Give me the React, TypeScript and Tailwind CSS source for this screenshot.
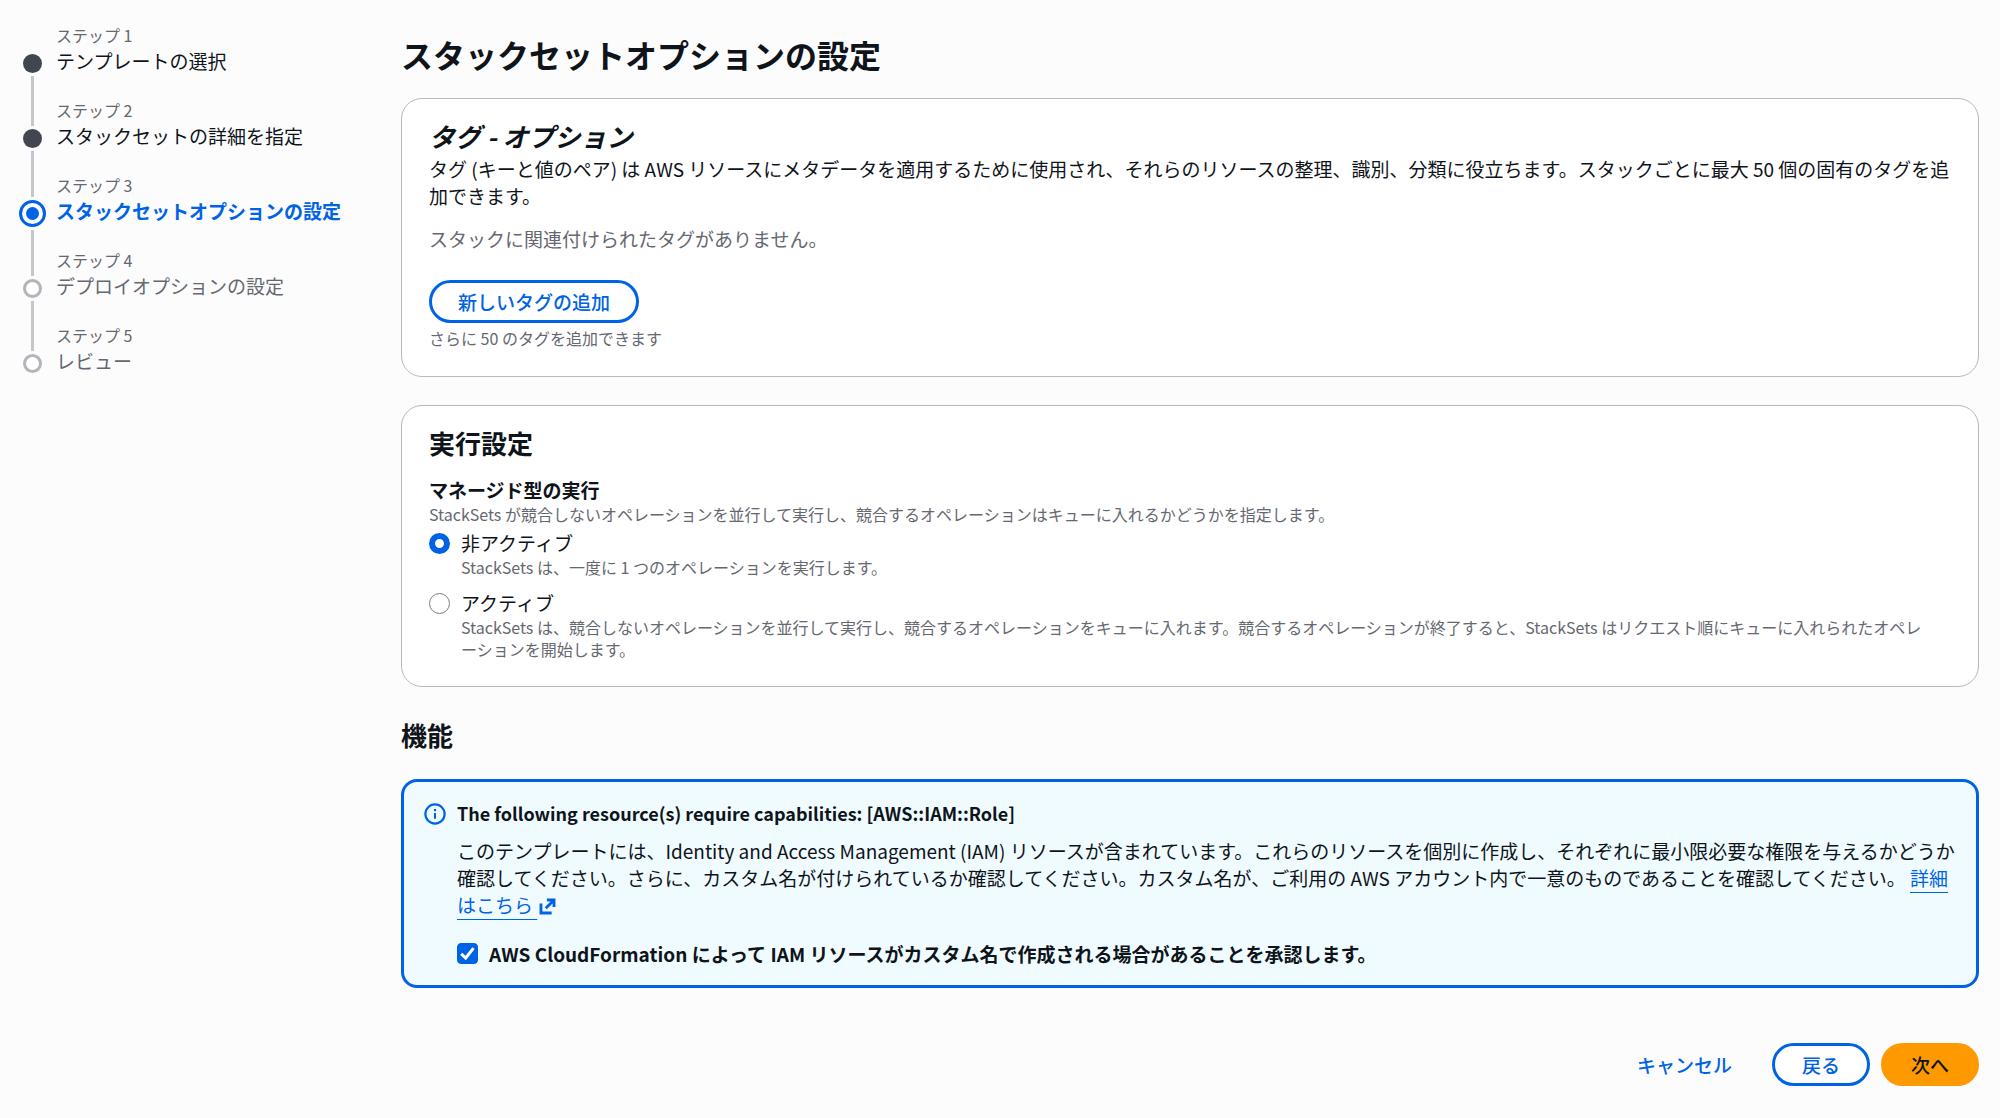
import { useState } from 'react';
import { clsx } from 'clsx';

type StepState = 'visited' | 'active' | 'upcoming';

const STEPS: { title: string; state: StepState }[] = [
  { title: 'テンプレートの選択', state: 'visited' },
  { title: 'スタックセットの詳細を指定', state: 'visited' },
  { title: 'スタックセットオプションの設定', state: 'active' },
  { title: 'デプロイオプションの設定', state: 'upcoming' },
  { title: 'レビュー', state: 'upcoming' },
];

const EXECUTION_OPTIONS = [
  {
    value: 'inactive',
    label: '非アクティブ',
    description: 'StackSets は、一度に 1 つのオペレーションを実行します。',
  },
  {
    value: 'active',
    label: 'アクティブ',
    description:
      'StackSets は、競合しないオペレーションを並行して実行し、競合するオペレーションをキューに入れます。競合するオペレーションが終了すると、StackSets はリクエスト順にキューに入れられたオペレーションを開始します。',
  },
];

function StepDot({ state }: { state: StepState }) {
  if (state === 'active') {
    return (
      <span className="my-[3px] flex size-[27px] shrink-0 items-center justify-center rounded-full border-[3px] border-[#0062e4]">
        <span className="size-[13px] rounded-full bg-[#0062e4]" />
      </span>
    );
  }
  return (
    <span
      className={clsx(
        'my-[3px] size-[19px] shrink-0 rounded-full',
        state === 'visited' ? 'bg-[#424650]' : 'border-[3px] border-[#b4b4bb] bg-white',
      )}
    />
  );
}

function Steps() {
  return (
    <nav aria-label="ステップ" className="w-[401px] shrink-0 pt-[23px] pl-[19px]">
      <ol>
        {STEPS.map((step, i) => {
          const last = i === STEPS.length - 1;
          return (
            <li key={step.title} className="flex gap-[10px]">
              <div className="flex w-[27px] shrink-0 flex-col items-center">
                <span
                  className={clsx(
                    'w-[3px] shrink-0',
                    step.state === 'active' ? 'h-[24px]' : 'h-[28px]',
                    i > 0 && 'bg-[#c6c6cd]',
                  )}
                />
                <StepDot state={step.state} />
                {!last && <span className="w-[3px] flex-1 bg-[#c6c6cd]" />}
              </div>
              <div className={clsx(!last && 'pb-[23px]')}>
                <p className="text-[16px] leading-[24px] text-[#656871]">ステップ {i + 1}</p>
                <p
                  className={clsx(
                    'text-[19px] leading-[28px]',
                    step.state === 'visited' && 'text-[#0f141a]',
                    step.state === 'active' && 'font-bold text-[#0062e4]',
                    step.state === 'upcoming' && 'text-[#656871]',
                  )}
                >
                  {step.title}
                </p>
              </div>
            </li>
          );
        })}
      </ol>
    </nav>
  );
}

function InfoIcon() {
  return (
    <svg viewBox="0 0 16 16" className="size-[22px] shrink-0" fill="none" stroke="#0062e4">
      <circle cx="8" cy="8" r="7" strokeWidth="1.6" />
      <path d="M8 7.2v4.3M8 4.4v1.6" strokeWidth="1.5" />
    </svg>
  );
}

function ExternalIcon() {
  return (
    <svg viewBox="0 0 16 16" className="ml-px inline size-[19px] align-[-3px]" fill="none" stroke="currentColor" strokeWidth="2.4">
      <path d="M7.5 2.5H13.5V8.5M13.5 2.5L6.5 9.5M2.5 5.5v8h9" />
    </svg>
  );
}

export default function App() {
  const [execution, setExecution] = useState('inactive');
  const [acknowledged, setAcknowledged] = useState(true);

  return (
    <div className="flex min-h-screen bg-[#fcfcfd] font-['Noto_Sans_CJK_JP',sans-serif] text-[19px] leading-[27px] text-[#0f141a]" lang="ja">
      <Steps />

      <main className="min-w-0 flex-1 pt-[34px] pr-[21px]">
        <h1 className="text-[32px] leading-[40px] font-bold">スタックセットオプションの設定</h1>

        <section className="mt-6 rounded-[21px] border border-[#b8b8c0] bg-white px-[27px] pt-5 pb-[27px]">
          <h2 className="mb-0.5 text-[26px] leading-[34px] font-bold italic">タグ - オプション</h2>
          <p>
            タグ (キーと値のペア) は AWS リソースにメタデータを適用するために使用され、それらのリソースの整理、識別、分類に役立ちます。スタックごとに最大
            50 個の固有のタグを追加できます。
          </p>
          <p className="mt-4 text-[#656871]">スタックに関連付けられたタグがありません。</p>
          <button
            type="button"
            className="mt-7 block h-[43px] rounded-full border-[3px] border-[#0062e4] px-[26px] font-medium text-[#0062e4]"
          >
            新しいタグの追加
          </button>
          <p className="mt-1 text-[16px] leading-[22px] text-[#656871]">さらに 50 のタグを追加できます</p>
        </section>

        <section className="mt-7 rounded-[21px] border border-[#b8b8c0] bg-white px-[27px] pt-5 pb-[26px]">
          <h2 className="text-[26px] leading-[34px] font-bold">実行設定</h2>
          <fieldset className="mt-4">
            <legend className="font-bold">マネージド型の実行</legend>
            <p className="text-[16px] leading-[22px] text-[#656871]">
              StackSets が競合しないオペレーションを並行して実行し、競合するオペレーションはキューに入れるかどうかを指定します。
            </p>
            <div className="mt-1 flex flex-col gap-[11px]">
              {EXECUTION_OPTIONS.map((option) => (
                <div key={option.value} className="flex gap-[11px]">
                  <input
                    type="radio"
                    id={option.value}
                    name="execution"
                    checked={execution === option.value}
                    onChange={() => setExecution(option.value)}
                    aria-describedby={`${option.value}-description`}
                    className="mt-1 size-[21px] shrink-0 appearance-none rounded-full border border-[#7c7c84] bg-white checked:border-[6px] checked:border-[#0062e4]"
                  />
                  <div className="min-w-0 flex-1 pr-4">
                    <label htmlFor={option.value} className="block">
                      {option.label}
                    </label>
                    <p id={`${option.value}-description`} className="text-[16px] leading-[22px] text-[#656871]">
                      {option.description}
                    </p>
                  </div>
                </div>
              ))}
            </div>
          </fieldset>
        </section>

        <h2 className="mt-[31px] text-[26px] leading-[34px] font-bold">機能</h2>

        <section className="mt-[27px] flex gap-[11px] rounded-[16px] border-[3px] border-[#0062e4] bg-[#f0fbff] px-5 py-[18px]">
          <div className="pt-[3px]">
            <InfoIcon />
          </div>
          <div className="min-w-0 flex-1">
            <h3 className="text-[18px] font-bold">The following resource(s) require capabilities: [AWS::IAM::Role]</h3>
            <p className="mt-[10px]">
              このテンプレートには、Identity and Access Management (IAM)
              リソースが含まれています。これらのリソースを個別に作成し、それぞれに最小限必要な権限を与えるかどうか確認してください。さらに、カスタム名が付けられているか確認してください。カスタム名が、ご利用の
              AWS アカウント内で一意のものであることを確認してください。{' '}
              <a href="#" className="text-[#0062e4]">
                <span className="underline decoration-1 underline-offset-[6px]">詳細はこちら </span>
                <ExternalIcon />
              </a>
            </p>
            <div className="mt-[22px] flex items-center gap-[11px]">
              <span className="relative flex size-[21px]">
                <input
                  type="checkbox"
                  id="acknowledge"
                  checked={acknowledged}
                  onChange={(e) => setAcknowledged(e.target.checked)}
                  className="size-[21px] appearance-none rounded-[4px] border border-[#8c8c94] bg-white checked:border-[#0062e4] checked:bg-[#0062e4]"
                />
                {acknowledged && (
                  <svg viewBox="0 0 14 14" className="pointer-events-none absolute inset-0" fill="none" stroke="#fff" strokeWidth="2">
                    <path d="M2.8 7.2L5.8 10L11 3.4" />
                  </svg>
                )}
              </span>
              <label htmlFor="acknowledge" className="font-bold">
                AWS CloudFormation によって IAM リソースがカスタム名で作成される場合があることを承認します。
              </label>
            </div>
          </div>
        </section>

        <div className="mt-[55px] flex justify-end gap-[11px] font-medium">
          <button type="button" className="h-[43px] px-[29px] text-[#0062e4]">
            キャンセル
          </button>
          <button type="button" className="h-[43px] rounded-full border-[3px] border-[#0062e4] bg-white px-[27px] text-[#0062e4]">
            戻る
          </button>
          <button type="button" className="h-[43px] rounded-full border-[3px] border-[#ff9900] bg-[#ff9900] px-[27px]">
            次へ
          </button>
        </div>
      </main>
    </div>
  );
}
